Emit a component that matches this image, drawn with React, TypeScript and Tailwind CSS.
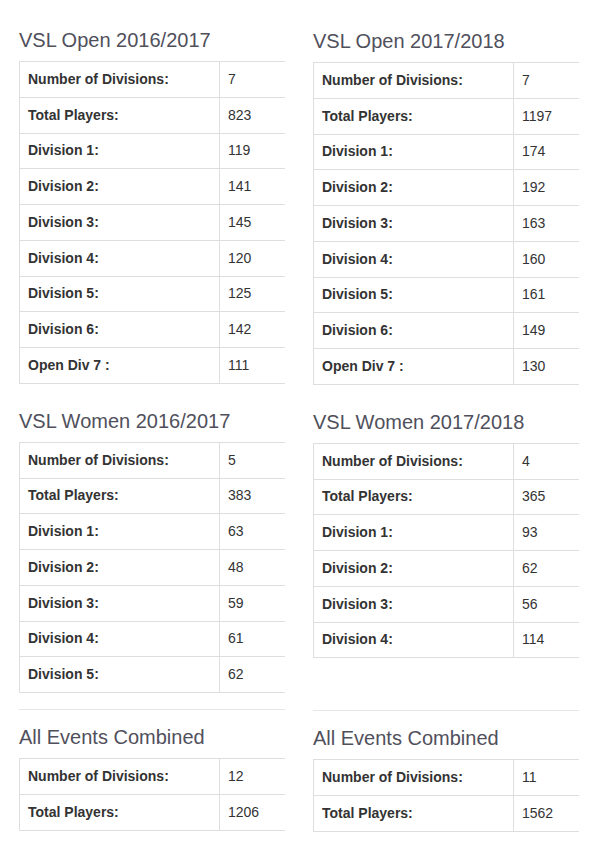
import React from 'react';

type Row = [string, string];

const sections: { left: { title: string; rows: Row[] }; right: { title: string; rows: Row[] }; divider?: boolean }[] = [
  {
    left: {
      title: 'VSL Open 2016/2017',
      rows: [
        ['Number of Divisions:', '7'],
        ['Total Players:', '823'],
        ['Division 1:', '119'],
        ['Division 2:', '141'],
        ['Division 3:', '145'],
        ['Division 4:', '120'],
        ['Division 5:', '125'],
        ['Division 6:', '142'],
        ['Open Div 7 :', '111'],
      ],
    },
    right: {
      title: 'VSL Open 2017/2018',
      rows: [
        ['Number of Divisions:', '7'],
        ['Total Players:', '1197'],
        ['Division 1:', '174'],
        ['Division 2:', '192'],
        ['Division 3:', '163'],
        ['Division 4:', '160'],
        ['Division 5:', '161'],
        ['Division 6:', '149'],
        ['Open Div 7 :', '130'],
      ],
    },
  },
  {
    left: {
      title: 'VSL Women 2016/2017',
      rows: [
        ['Number of Divisions:', '5'],
        ['Total Players:', '383'],
        ['Division 1:', '63'],
        ['Division 2:', '48'],
        ['Division 3:', '59'],
        ['Division 4:', '61'],
        ['Division 5:', '62'],
      ],
    },
    right: {
      title: 'VSL Women 2017/2018',
      rows: [
        ['Number of Divisions:', '4'],
        ['Total Players:', '365'],
        ['Division 1:', '93'],
        ['Division 2:', '62'],
        ['Division 3:', '56'],
        ['Division 4:', '114'],
      ],
    },
  },
  {
    divider: true,
    left: {
      title: 'All Events Combined',
      rows: [
        ['Number of Divisions:', '12'],
        ['Total Players:', '1206'],
      ],
    },
    right: {
      title: 'All Events Combined',
      rows: [
        ['Number of Divisions:', '11'],
        ['Total Players:', '1562'],
      ],
    },
  },
];

const StatsBlock = ({ title, rows, divider }: { title: string; rows: Row[]; divider?: boolean }) => (
  <div>
    {divider && <div className="border-t border-[#e6e6e6] mb-[16px]" />}
    <h3 className="text-[20px] leading-[22px] text-[#50505c] mb-[10px]">{title}</h3>
    <div className="border-l border-b border-[#dedede]">
      {rows.map(([label, value]) => (
        <div key={label} className="flex h-[35.75px] items-center border-t border-[#dedede] text-[14px] text-[#333]">
          <div className="w-[199px] pl-[8px] font-bold">{label}</div>
          <div className="h-full flex items-center flex-1 pl-[8px] border-l border-[#dedede]">{value}</div>
        </div>
      ))}
    </div>
  </div>
);

export default function App() {
  return (
    <div className="bg-white w-[592px] h-[848px] overflow-hidden font-['Liberation_Sans',Arial,sans-serif]">
      <div className="grid grid-cols-[266px_266px] gap-x-[28px] pl-[19px] pt-[29px]">
        {sections.map((s, i) => (
          <React.Fragment key={i}>
            <div className={i === 1 ? 'mt-[25px]' : i === 2 ? 'mt-[16px]' : ''}>
              <StatsBlock title={s.left.title} rows={s.left.rows} divider={s.divider} />
            </div>
            <div className={i === 1 ? 'mt-[26px]' : i === 2 ? 'mt-[17px]' : 'mt-px'}>
              <StatsBlock title={s.right.title} rows={s.right.rows} divider={s.divider} />
            </div>
          </React.Fragment>
        ))}
      </div>
    </div>
  );
}
